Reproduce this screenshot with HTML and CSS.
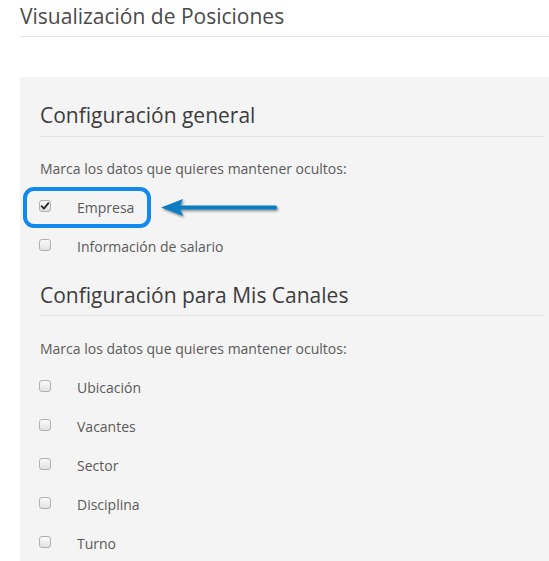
FILE: index.html
```html
<!DOCTYPE html>
<html lang="es">
<head>
<meta charset="utf-8">
<title>Visualización de Posiciones</title>
<link rel="stylesheet" href="styles.css">
</head>
<body>
<h1 class="page-title">Visualización de Posiciones</h1>
<section class="panel">
  <h2 class="section-title first">Configuración general</h2>
  <p class="hint">Marca los datos que quieres mantener ocultos:</p>
  <div class="row highlighted">
    <span class="box checked"><svg viewBox="0 0 12 12" width="12" height="12"><path d="M2.6 6.2 L4.9 8.6 L9.4 3.2" fill="none" stroke="#2b2b2b" stroke-width="1.9" stroke-linecap="round" stroke-linejoin="round"/></svg></span>
    <span class="label">Empresa</span>
    <span class="callout"></span>
    <svg class="arrow" viewBox="0 0 124 24" width="124" height="24">
      <defs>
        <filter id="sh" x="-10%" y="-40%" width="120%" height="200%">
          <feDropShadow dx="1.2" dy="1.6" stdDeviation="1" flood-color="#000" flood-opacity="0.45"/>
        </filter>
      </defs>
      <g filter="url(#sh)" fill="#0b7cc3">
        <polygon points="1,10.5 23,2 19.5,10.5 23,19"/>
        <rect x="18" y="8.4" width="99" height="4.2" rx="1.6"/>
      </g>
    </svg>
  </div>
  <div class="row">
    <span class="box"></span>
    <span class="label">Información de salario</span>
  </div>

  <h2 class="section-title">Configuración para Mis Canales</h2>
  <p class="hint second">Marca los datos que quieres mantener ocultos:</p>
  <div class="row"><span class="box"></span><span class="label">Ubicación</span></div>
  <div class="row"><span class="box"></span><span class="label">Vacantes</span></div>
  <div class="row"><span class="box"></span><span class="label">Sector</span></div>
  <div class="row"><span class="box"></span><span class="label">Disciplina</span></div>
  <div class="row"><span class="box"></span><span class="label">Turno</span></div>
</section>
</body>
</html>
```
FILE: styles.css
```css
html, body {
  margin: 0;
  padding: 0;
  background: #ffffff;
  overflow: hidden;
}
body {
  padding-left: 20px;
  font-family: "Open Sans", "Noto Sans", sans-serif;
  color: #5a5a5a;
}
.page-title {
  margin: 0;
  font-size: 21px;
  font-weight: 400;
  line-height: 32px;
  color: #4a4a4a;
  padding-bottom: 4px;
  border-bottom: 1px solid #e3e3e3;
}
.panel {
  margin-top: 40px;
  background: #f4f4f4;
  padding: 22px 5px 40px 20px;
}
.section-title {
  margin: 22px 0 0 0;
  font-size: 21px;
  font-weight: 400;
  line-height: 32px;
  color: #3c3c3c;
  padding-bottom: 4px;
  border-bottom: 1px solid #e1e1e1;
}
.section-title.first {
  margin-top: 0;
  padding-bottom: 5px;
}
.hint {
  margin: 22px 0 0 0;
  font-size: 14px;
  line-height: 20px;
  color: #5a5a5a;
}
.hint.second {
  margin-top: 23px;
}
.row {
  position: relative;
  display: flex;
  align-items: flex-start;
  margin-top: 19px;
  height: 20px;
  font-size: 14px;
  line-height: 20px;
}
.box {
  box-sizing: border-box;
  width: 12px;
  height: 12px;
  margin-top: 2px;
  margin-left: -1px;
  border: 1px solid #b0b0b0;
  border-radius: 3px;
  background: linear-gradient(#fafafa, #e2e2e2);
  display: flex;
  align-items: center;
  justify-content: center;
  flex: none;
}
.box svg {
  display: block;
  margin: -1px;
}
.label {
  margin-left: 26px;
  color: #5a5a5a;
}
.callout {
  position: absolute;
  left: -17px;
  top: -11px;
  width: 128px;
  height: 41px;
  box-sizing: border-box;
  border: 4px solid #1289ee;
  border-radius: 11px;
}
.arrow {
  position: absolute;
  left: 120px;
  top: -1px;
}
```
